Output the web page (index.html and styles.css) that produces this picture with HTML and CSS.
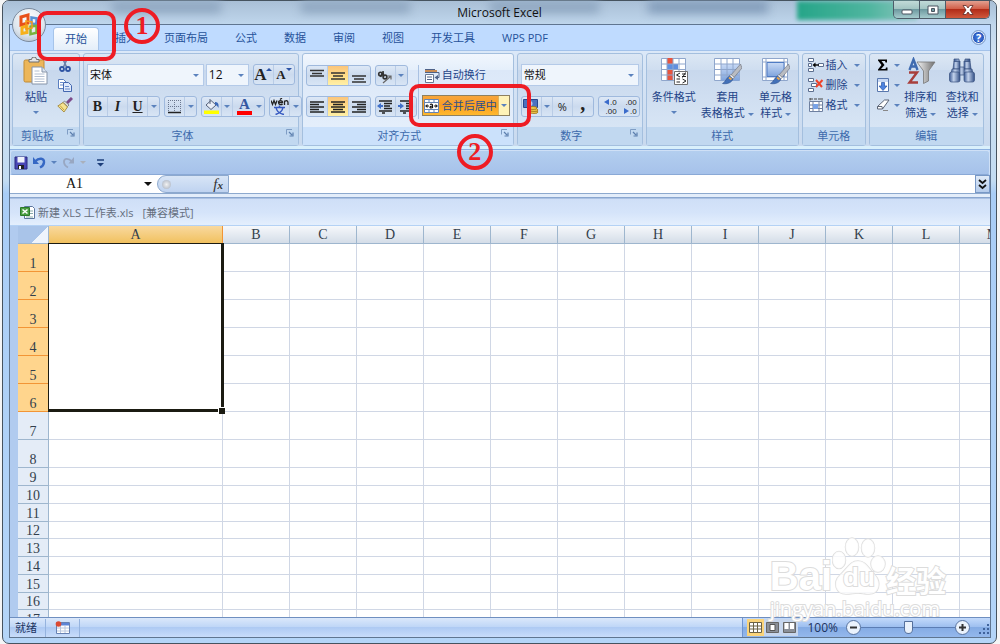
FILE: index.html
```html
<!DOCTYPE html>
<html lang="zh-CN">
<head>
<meta charset="utf-8">
<title>Microsoft Excel</title>
<link rel="stylesheet" href="styles.css">
</head>
<body>
<svg class="defs" aria-hidden="true">
  <defs>
    <linearGradient id="blue" x2="0" y2="1"><stop stop-color="#c9daf5"/><stop offset="1" stop-color="#7fa4dd"/></linearGradient>
    <linearGradient id="steel" x2="1" y2="0"><stop stop-color="#3d5c96"/><stop offset=".4" stop-color="#c3d3ec"/><stop offset="1" stop-color="#324f86"/></linearGradient>
    <linearGradient id="funnel" x2="1" y2="0"><stop stop-color="#f4f4f4"/><stop offset="1" stop-color="#6f6f6f"/></linearGradient>
    <symbol id="launch" viewBox="0 0 8 8"><path d="M.5 5.500V.5H6" fill="none" stroke="#7f9dc4"/><path d="M3 3l3 3M7 3.500V7H3.500" fill="none" stroke="#5c7fae" stroke-width="1.200"/></symbol>
    <symbol id="brush" viewBox="0 0 20 22"><path d="M18.500 1L9 12l3 2.500L20 5z" fill="#b9bcc2" stroke="#6b6f78" stroke-width=".6"/><path d="M9 11.500l3.200 2.800-1.200 1.700-3.700-3z" fill="#eee" stroke="#666" stroke-width=".5"/><path d="M7.500 13l3.300 3c-.8 3.600-5.800 5.500-10.300 4.500 3.200-1.600 3.500-5.300 7-7.500z" fill="#4270b8" stroke="#2d5391" stroke-width=".6"/><path d="M7 14.500l2.500 2" stroke="#e8a54a" stroke-width="1.800"/></symbol>
  </defs>
</svg>

<main class="window">
  <header class="titlebar">
    <span class="blur b1"></span><span class="blur b2"></span><span class="blur b3"></span><span class="blur b4"></span><span class="blur green"></span>
    <h1 class="title">Microsoft Excel</h1>
    <div class="winbtns">
      <button class="win" aria-label="最小化"><svg width="12" height="12"><rect x="1" y="6" width="10" height="4" rx="1" fill="#fff" stroke="#4a5560"/></svg></button>
      <button class="win" aria-label="最大化"><svg width="12" height="12"><path d="M1 2h10v8H1zM4.500 4.500v3h3v-3z" fill="#fff" stroke="#4a5560" fill-rule="evenodd"/></svg></button>
      <button class="win close" aria-label="关闭"><svg width="12" height="12"><path d="M1 1.500h3.200L6 4l1.800-2.500H11L8 6l3 4.500H7.800L6 8l-1.800 2.500H1L4 6z" fill="#fff" stroke="#5e2a26" stroke-width=".8"/></svg></button>
    </div>
    <button class="orb" aria-label="Office 按钮"><svg width="24" height="26" viewBox="0 0 24 26"><g fill="none"><path d="M4 5l7-2v8l-7 2z" stroke="#e8501a" stroke-width="3"/><path d="M14.500 5.500l5 .8v6l-5-.8z" stroke="#5a93d4" stroke-width="2.500"/><path d="M5 15.500l5-1.500v6.500l-5 1z" stroke="#f6b11b" stroke-width="3"/><path d="M13.500 14.500l6-.8v7l-6 1.500z" stroke="#7bb23c" stroke-width="2.500"/><path d="M9 9l6 1v6l-6 1z" stroke="#f39a1d" stroke-width="1.500"/></g></svg></button>
  </header>

  <div class="inner">
    <nav class="tabs">
      <button class="tab active">开始<span class="mark mark-tab"></span></button>
      <button class="tab">插入<span class="num num-one">1</span></button>
      <button class="tab">页面布局</button>
      <button class="tab">公式</button>
      <button class="tab">数据</button>
      <button class="tab">审阅</button>
      <button class="tab">视图</button>
      <button class="tab">开发工具</button>
      <button class="tab">WPS PDF</button>
      <button class="help" aria-label="帮助">?</button>
    </nav>

    <div class="ribbon">
      <section class="group g-clip">
        <div class="body row-body">
          <button class="big"><svg width="28" height="28" viewBox="0 0 28 28"><rect x="2" y="3" width="20" height="22" rx="1.500" fill="#ecb65a" stroke="#c08b35"/><path d="M7 5V2.500h2.500a2.500 2.500 0 0 1 5 0H17V5z" fill="#e6e6e6" stroke="#6f6f6f"/><path d="M10 10h10l5 5v12H10z" fill="#fff" stroke="#8593a8"/><path d="M20 10v5h5" fill="#dbe4f0" stroke="#8593a8"/><path d="M12.500 14h5M12.500 17h10M12.500 19.500h10M12.500 22h10M12.500 24.500h10" stroke="#b4c0d2"/></svg><span>粘贴</span><i class="caret"></i></button>
          <div class="stack">
            <button class="tiny" aria-label="剪切"><svg width="16" height="16" viewBox="0 0 16 16"><path d="M5.500 1l4 9M10.500 1l-4 9" stroke="#6a7fa8" stroke-width="1.600"/><g fill="none" stroke="#2f55a4" stroke-width="1.800"><circle cx="5" cy="12" r="2"/><circle cx="11" cy="12" r="2"/></g></svg></button>
            <button class="tiny" aria-label="复制"><svg width="16" height="16" viewBox="0 0 16 16"><path d="M1.500 2.500h5l3 3v6h-8z" fill="#fff" stroke="#5a7fc0"/><path d="M6.500 5.500h5l3 3v6h-8z" fill="#dfe9fb" stroke="#4468b0"/><path d="M8 9.500h4M8 12h5M3 5.500h3M3 8h3" stroke="#6b8ccb"/></svg></button>
            <button class="tiny" aria-label="格式刷"><svg width="16" height="16" viewBox="0 0 16 16"><path d="M15 1l-5 5" stroke="#7c4b8b" stroke-width="3"/><path d="M7.500 4l4.500 4-1.500 1.500L6 5.500z" fill="#ddd" stroke="#666" stroke-width=".7"/><path d="M6 5.500L10.500 10 7 15 .8 9z" fill="#f6e391" stroke="#9b7c2a" stroke-width=".8"/><path d="M3 8.500l4 4.500" stroke="#c7a23a"/></svg></button>
          </div>
        </div>
        <h2 class="label with-launch">剪贴板<button class="launch" aria-label="剪贴板选项"><svg width="8" height="8"><use href="#launch"/></svg></button></h2>
      </section>

      <section class="group g-font">
        <div class="body">
          <div class="line">
            <div class="sel grow"><select aria-label="字体"><option>宋体</option></select><i class="caret"></i></div>
            <div class="sel size"><select aria-label="字号"><option>12</option></select><i class="caret"></i></div>
            <div class="set push"><button class="ser big-a">A<sup class="up"></sup></button><button class="ser small-a">A<sup class="down"></sup></button></div>
          </div>
          <div class="line between">
            <div class="set"><button class="ser">B</button><button class="ser"><em>I</em></button><button class="ser"><u>U</u></button><button class="drop" aria-label="下划线"><i class="caret"></i></button></div>
            <div class="set"><button aria-label="边框"><svg width="14" height="14"><path d="M.5 0v12M6.500 0v12M12.500 0v12M0 .5h13M0 6.500h13" stroke="#6b7890" stroke-dasharray="1 1"/><path d="M0 12.500h13" stroke="#222" stroke-width="1.500"/></svg></button><button class="drop" aria-label="边框选项"><i class="caret"></i></button></div>
            <div class="set"><button aria-label="填充颜色"><svg width="16" height="15" viewBox="0 0 16 15"><path d="M2 6l5-4.500L12 6l-5 4.500z" fill="#e9eef7" stroke="#56627a"/><path d="M6 0v5" stroke="#56627a"/><path d="M11 3c3 0 4 2 3.500 6-1-2-2-3-3.500-3z" fill="#3c69b8"/><path d="M0 11.500h15V15H0z" fill="#ff0"/></svg></button><button class="drop" aria-label="填充选项"><i class="caret"></i></button><button class="ser fontcolor">A</button><button class="drop" aria-label="字体颜色选项"><i class="caret"></i></button></div>
            <div class="set"><button aria-label="拼音指南"><svg width="18" height="17" viewBox="0 0 18 17"><g fill="none" stroke="#222" stroke-width="1.300"><path d="M0 2.500l1.500 4 1.500-4 1.500 4L6 2.500M7.500 4.500h4c0-2.500-4-2.500-4 0 0 2.500 3 2.500 4 1.500M9 1.500l2-1.500M13.500 7V2.500M13.500 4c1-2 3.500-1.500 3.500 .5V7"/></g><path d="M3 9.500h11M8.500 7.500v2M4.500 16.500c5-1.500 7-4 7.500-7M5 9.500c.5 3 3 6 8 7" fill="none" stroke="#3558c0" stroke-width="1.500"/></svg></button><button class="drop" aria-label="拼音选项"><i class="caret"></i></button></div>
          </div>
        </div>
        <h2 class="label with-launch">字体<button class="launch" aria-label="字体选项"><svg width="8" height="8"><use href="#launch"/></svg></button></h2>
      </section>

      <section class="group g-align hot">
        <div class="body row-body align-body">
          <div class="lines">
            <div class="line">
              <div class="set three"><button aria-label="顶端对齐"><svg width="14" height="14"><path d="M0 1.500h14M2 4.500h10M0 7h14" stroke="#333" stroke-width="1.500"/></svg></button><button class="on" aria-label="垂直居中"><svg width="14" height="14"><path d="M0 4h14M2 7h10M0 10h14" stroke="#333" stroke-width="1.500"/></svg></button><button aria-label="底端对齐"><svg width="14" height="14"><path d="M0 7h14M2 10h10M0 13h14" stroke="#333" stroke-width="1.500"/></svg></button></div>
              <div class="set"><button aria-label="方向"><svg width="16" height="16" viewBox="0 0 16 16"><g fill="none" stroke="#333" stroke-width="1.600"><circle cx="3.500" cy="6" r="1.800"/><path d="M5.500 4.500L3.500 9"/><circle cx="8" cy="9" r="1.900"/><path d="M6 3l.5 6"/><path d="M6 15L14 8M10.500 8H14v3.500" stroke="#666" stroke-width="1.200"/></g></svg></button><button class="drop" aria-label="方向选项"><i class="caret"></i></button></div>
            </div>
            <div class="line">
              <div class="set three"><button aria-label="左对齐"><svg width="14" height="12"><path d="M0 1h14M0 3.500h9M0 6h14M0 8.500h9M0 11h14" stroke="#222" stroke-width="1.500"/></svg></button><button class="on" aria-label="居中"><svg width="14" height="12"><path d="M0 1h14M2 3.500h10M0 6h14M2 8.500h10M0 11h14" stroke="#222" stroke-width="1.500"/></svg></button><button aria-label="右对齐"><svg width="14" height="12"><path d="M0 1h14M5 3.500h9M0 6h14M5 8.500h9M0 11h14" stroke="#222" stroke-width="1.500"/></svg></button></div>
              <div class="set"><button aria-label="减少缩进量"><svg width="16" height="14"><path d="M2 1h13M7 3.500h8M7 6h6M7 8.500h8M2 11h13M5 13h3" stroke="#222" stroke-width="1.500"/><path d="M0 6l4-3v2h2v2H4v2z" fill="#3f6fc9"/></svg></button><button aria-label="增加缩进量"><svg width="16" height="14"><path d="M2 1h13M8 3.500h7M8 6h6M8 8.500h7M2 11h13M5 13h3" stroke="#222" stroke-width="1.500"/><path d="M6 6L2 3v2H0v2h2v2z" fill="#3f6fc9"/></svg></button></div>
            </div>
          </div>
          <div class="wrapcol">
            <button class="wrapbtn"><svg width="16" height="15"><path d="M1 1.500h10M1 4.500h14v5h-3" fill="none" stroke="#4e6288"/><path d="M1 3h12" stroke="#c98b52" stroke-width="2"/><path d="M1.500 6.500h8v8h-8z" fill="#fff" stroke="#6a7891"/><path d="M3 9h5M3 11.500h5" stroke="#4e6288"/><path d="M14 7l-3.500 2.500L14 12z" fill="#4e6288"/></svg>自动换行</button>
            <div class="merge"><button class="mergebtn"><svg width="15" height="14"><path d="M.5.5h14v13H.5zM5 .5v3M10 .5v3M5 10.500v3M10 10.500v3M.5 3.500h14M.5 10.500h14" fill="#fff" stroke="#6484b5"/><path d="M1 7l2.500-2v1.500H5v1H3.500V9zM14 7l-2.500-2v1.500H10v1h1.500V9z" fill="#222"/><path d="M6 5.500c1.500-.8 2.500-.3 2.500.8V9M8.500 7c-3 0-3 2-1.500 2 .8 0 1.500-.5 1.500-1" fill="none" stroke="#111" stroke-width="1.200"/></svg>合并后居中</button><button class="mergedrop" aria-label="合并选项"><i class="caret"></i></button><span class="mark mark-merge"></span><span class="num num-two">2</span></div>
          </div>
        </div>
        <h2 class="label with-launch">对齐方式<button class="launch" aria-label="对齐选项"><svg width="8" height="8"><use href="#launch"/></svg></button></h2>
      </section>

      <section class="group g-num">
        <div class="body">
          <div class="line"><div class="sel grow"><select aria-label="数字格式"><option>常规</option></select><i class="caret"></i></div></div>
          <div class="line between">
            <div class="set"><button aria-label="会计数字格式"><svg width="16" height="15"><path d="M.5.500h14v8H.5z" fill="#4c72bf" stroke="#29488e"/><circle cx="7" cy="4.500" r="2.500" fill="#b9cdf0"/><g fill="#f0c64a" stroke="#9b7219" stroke-width=".8"><ellipse cx="11" cy="13" rx="4" ry="1.500"/><ellipse cx="11" cy="11" rx="4" ry="1.500"/><ellipse cx="10" cy="9" rx="4" ry="1.500"/></g></svg></button><button class="drop" aria-label="货币选项"><i class="caret"></i></button><button class="pct">%</button><button class="ser comma">,</button></div>
            <div class="set"><button class="dec"><span class="d-left">.0</span><span>.00</span></button><button class="dec"><span>.00</span><span class="d-right">.0</span></button></div>
          </div>
        </div>
        <h2 class="label with-launch">数字<button class="launch" aria-label="数字选项"><svg width="8" height="8"><use href="#launch"/></svg></button></h2>
      </section>

      <section class="group g-style">
        <div class="body row-body">
          <button class="big"><svg width="28" height="28" viewBox="0 0 28 28"><path d="M1.500 1.500h24v22h-24z" fill="#fff" stroke="#8fa6cc"/><path d="M7 1h6v22H7z" fill="#e8553e"/><path d="M7 7h11v5H7z" fill="#5f8fe0"/><path d="M7 1v22M13 1v22M19 1v22M1 7h24M1 12.500h24M1 18h24" stroke="#8fa6cc"/><path d="M14.500 14.500h13v13h-13z" fill="#fff" stroke="#707070"/><path d="M20 16l-3.500 2 3.500 2M16.500 22H20M16.500 25H20M22 17h4M22 19.500h4M25.500 15.500l-3 5M22.500 22l3.500 2-3.500 2" fill="none" stroke="#222"/></svg><span>条件格式</span><i class="caret"></i></button>
          <button class="big"><svg width="29" height="28" viewBox="0 0 29 28"><path d="M1.500 1.500h25v22h-25z" fill="#fff" stroke="#8fa6cc"/><path d="M8 7h18.500v16.500H8z" fill="url(#blue)"/><path d="M8 1v22M14 1v22M20 1v22M1 7h25M1 12.500h25M1 18h25" stroke="#8fa6cc"/><use href="#brush" x="9" y="6" width="20" height="22"/></svg><span>套用</span><span>表格格式 <i class="caret"></i></span></button>
          <button class="big"><svg width="29" height="28" viewBox="0 0 29 28"><path d="M1.500 1.500h25v22h-25zM1 5h25M1 20h25M5 1v22M23 1v22" fill="#fff" stroke="#8fa6cc"/><path d="M6 5.500h17v14H6z" fill="url(#blue)" stroke="#4f7bc4"/><use href="#brush" x="9" y="6" width="20" height="22"/></svg><span>单元格</span><span>样式 <i class="caret"></i></span></button>
        </div>
        <h2 class="label">样式</h2>
      </section>

      <section class="group g-cells">
        <div class="body cmds">
          <button class="cmd"><svg width="16" height="14"><path d="M.5 .5h5v3h-5zM.5 10.500h5v3h-5zM.5 5.500h3v3h-3zM10.500 5.500h5v3h-5z" fill="#fff" stroke="#5c6f90"/><path d="M6 7h5" stroke="#111" stroke-width="1.500"/><path d="M4.500 7l3-2.500v5z"/></svg>插入<i class="caret"></i></button>
          <button class="cmd"><svg width="16" height="14"><path d="M.5 .5h5v3h-5zM.5 10.500h5v3h-5zM3.500 5.500h5v3h-5z" fill="#fff" stroke="#5c6f90"/><path d="M8 2l6 7M14.500 2L8 9" stroke="#f0432a" stroke-width="2"/></svg>删除<i class="caret"></i></button>
          <button class="cmd"><svg width="16" height="15"><path d="M1.500 3.500h13v10h-13zM1 7h14M1 10.500h14M5 3v11M11 3v11" fill="#fff" stroke="#6e80a0"/><path d="M5 6h5v5H5z" fill="#79a3e6"/><path d="M2 1h12M2 0v2.500M14 0v2.500" stroke="#444" stroke-dasharray="3 1"/></svg>格式<i class="caret"></i></button>
        </div>
        <h2 class="label">单元格</h2>
      </section>

      <section class="group g-edit">
        <div class="body row-body">
          <div class="cmds">
            <button class="cmd" aria-label="求和"><svg width="14" height="14"><path d="M2 1.500h9v3H9.500L9 3H5.500L8.500 7l-3.500 4h4.500l.5-1.500h1.500v3H2v-1L5.500 7 2 2.500z"/></svg><i class="caret"></i></button>
            <button class="cmd" aria-label="填充"><svg width="14" height="15"><path d="M1.500.500h11v13h-11z" fill="#fff" stroke="#5877ad"/><path d="M2 1h10v3H2z" fill="#c7d8f4"/><path d="M5.500 4.500h3V8H11l-4 4.500L3 8h2.500z" fill="#4e83e0" stroke="#2a56a8" stroke-width=".7"/></svg><i class="caret"></i></button>
            <button class="cmd" aria-label="清除"><svg width="14" height="14"><path d="M8.500 2H13L6.500 11H1.500v-2.500z" fill="#fff" stroke="#5c6576"/><path d="M1.500 8.500H6l.5 2.500" fill="none" stroke="#5c6576"/><path d="M7 12.500h5" stroke="#888"/></svg><i class="caret"></i></button>
          </div>
          <button class="big"><svg width="30" height="28" viewBox="0 0 30 28"><path d="M3.500 13L7.500 2.500 11.500 13M5 9.500h5" fill="none" stroke="#3f6bb0" stroke-width="2.400"/><path d="M3 15.500h8l-7.500 10h8.500" fill="none" stroke="#a83f3c" stroke-width="2.400"/><path d="M11 5h18l-6.500 9v10l-5 2.500V14z" fill="url(#funnel)" stroke="#777" stroke-width=".8"/></svg><span>排序和</span><span>筛选 <i class="caret"></i></span></button>
          <button class="big"><svg width="28" height="28" viewBox="0 0 28 28"><g fill="url(#steel)" stroke="#38507e" stroke-width=".7"><path d="M6 4h6v8H5z"/><path d="M16 4h6l1 8h-7z"/><path d="M4 12h8l1 5H3z"/><path d="M16 12h8l1 5H15z"/><rect x="1.500" y="15" width="10.500" height="10" rx="2"/><rect x="16" y="15" width="10.500" height="10" rx="2"/><path d="M6 2h5v2.500H6zM17 2h5v2.500h-5zM12 10h4v8h-4z"/></g></svg><span>查找和</span><span>选择 <i class="caret"></i></span></button>
        </div>
        <h2 class="label">编辑</h2>
      </section>
    </div>

    <div class="qat">
      <button aria-label="保存"><svg width="14" height="14"><path d="M1 1h12v12H1z" fill="#4946b5" stroke="#2b2a80"/><path d="M3.500 1h7v5.500h-7z" fill="#eef1fb"/><path d="M4 9h6v4H4z" fill="#222"/><path d="M5 10h2v3H5z" fill="#fff"/></svg></button>
      <button class="undo" aria-label="撤消"><svg width="13" height="13"><path d="M2 5.500C6 1.500 11.500 2 11 6.500c-.3 2.500-2 4-4 5" fill="none" stroke="#3668c4" stroke-width="2.400"/><path d="M0 1v7h6z" fill="#3668c4"/></svg></button>
      <i class="caret"></i>
      <button class="undo" aria-label="恢复"><svg width="13" height="13"><path d="M10 5.500C6 1.500 1.500 2 2 6.500c.3 2.500 2 4 4 5" fill="none" stroke="#98a7c2" stroke-width="1.800"/><path d="M12 1v6.500H6.500z" fill="#98a7c2"/></svg></button>
      <i class="caret dim"></i>
      <button class="custom" aria-label="自定义快速访问工具栏"><svg width="7" height="8"><path d="M0 1h7" stroke="#1e3f7a" stroke-width="1.500"/><path d="M0 4h7L3.500 7.500z" fill="#1e3f7a"/></svg></button>
    </div>

    <div class="formula">
      <div class="namebox"><input class="cellref" aria-label="名称框" value="A1"><button aria-label="名称列表"><i class="caret black"></i></button></div>
      <button class="fx"><span class="knob"></span><span><i>f</i><small>x</small></span></button>
      <input class="fxinput" aria-label="编辑栏">
      <button class="expand" aria-label="展开编辑栏"><svg width="9" height="11"><path d="M1 1l3.500 3L8 1M1 6l3.500 3L8 6" fill="none" stroke="#111" stroke-width="1.800"/></svg></button>
    </div>

    <div class="booktitle">
      <svg width="15" height="15"><path d="M4.500 1.500h8l2 2v10h-10z" fill="#fff" stroke="#5d779f"/><path d="M.5 2.500h9v8h-9z" fill="#4c9f43" stroke="#2c7a28"/><path d="M2.500 4.500l5 4M7.500 4.500l-5 4" stroke="#fff" stroke-width="1.600"/><path d="M10 6h3M10 8.500h3M6 12h7" stroke="#8aa"/></svg>
      <span>新建 XLS 工作表.xls</span><span>[兼容模式]</span>
    </div>

    <div class="sheet">
      <table class="grid" id="grid"></table>
    </div>

    <footer class="status">
      <span class="ready">就绪</span>
      <button class="macro" aria-label="录制宏"><svg width="15" height="13"><path d="M1.500 1.500h13v11h-13z" fill="#fff" stroke="#6681b3"/><path d="M2 2h12v2.500H2z" fill="#5d84d6"/><path d="M2 7h12M2 10h12M5.500 5v7M10 5v7" stroke="#b8c6de"/><circle cx="3.500" cy="3" r="2.800" fill="#dc4a33"/></svg></button>
      <div class="right">
        <div class="views">
          <button class="on" aria-label="普通"><svg width="13" height="11"><path d="M.5.500h12v10H.5zM0 4h13M0 7h13M4.500 0v11M8.500 0v11" fill="#fff" stroke="#6b6246"/></svg></button>
          <button aria-label="页面布局"><svg width="13" height="11"><path d="M.5.500h12v10H.5z" fill="#8a8f98" stroke="#666"/><path d="M4 2.500h5v6H4z" fill="#fff" stroke="#555"/></svg></button>
          <button aria-label="分页预览"><svg width="13" height="11"><path d="M.5.500h12v10H.5z" fill="#8a8f98" stroke="#666"/><path d="M1.500 1h4v6h-4zM7 1h4v6H7z" fill="#fff"/></svg></button>
        </div>
        <span class="pc">100%</span>
        <button class="zoom" aria-label="缩小"><svg width="9" height="9"><path d="M1 4.500h7" stroke="#333" stroke-width="2"/></svg></button>
        <input class="slider" type="range" aria-label="显示比例" min="0" max="100" value="50">
        <button class="zoom" aria-label="放大"><svg width="9" height="9"><path d="M1 4.500h7M4.500 1v7" stroke="#333" stroke-width="2"/></svg></button>
        <svg class="grip" width="11" height="11"><path d="M8 1h2v2H8zM4 5h2v2H4zM8 5h2v2H8zM0 9h2v2H0zM4 9h2v2H4zM8 9h2v2H8z" fill="#40639c"/></svg>
      </div>
    </footer>
  </div>

  <div class="watermark" aria-hidden="true">
    <div class="wm-top"><span class="wm-bai">Bai</span><span class="wm-paw"><svg width="54" height="58" viewBox="0 0 54 58"><g fill="#fff" fill-opacity=".8" stroke="#dedede" stroke-width="1.500"><ellipse cx="20" cy="10" rx="6.500" ry="9"/><ellipse cx="36" cy="11" rx="6.500" ry="9"/><ellipse cx="7" cy="23" rx="6.500" ry="8.500"/><ellipse cx="46" cy="27" rx="7" ry="8"/><path d="M26 24c8 0 11 8 17 14 7 8 4 19-6 19-5 0-7-1-11-1s-7 1-12 1C4 57 0 46 8 38c7-6 10-14 18-14z"/></g></svg><b>du</b></span><span class="wm-cn">经验</span></div>
    <div class="wm-url">jingyan.baidu.com</div>
  </div>
</main>
<script src="grid.js"></script>
</body>
</html>
```
FILE: grid.js
```js
const columns = "ABCDEFGHIJKLM".split("");
const rowCount = 17;
const mergedRows = 6;
const tallRows = 8;

const heads = columns
  .map((c, i) => `<th scope="col"${i === 0 ? ' class="picked"' : ""}>${c}</th>`)
  .join("");

let html = `<colgroup><col class="c-head"><col class="c-first">${'<col class="c-rest">'.repeat(columns.length - 1)}</colgroup>`;
html += `<thead><tr><td class="corner"></td>${heads}</tr></thead><tbody>`;

for (let r = 1; r <= rowCount; r++) {
  const picked = r <= mergedRows;
  html += `<tr class="${r <= tallRows ? "tall" : "short"}"><th scope="row"${picked ? ' class="picked"' : ""}>${r}</th>`;
  if (r === 1) html += `<td class="merged" rowspan="${mergedRows}"></td>`;
  html += "<td></td>".repeat(columns.length - (picked ? 1 : 0)) + "</tr>";
}

document.getElementById("grid").innerHTML = html + "</tbody>";
```
FILE: styles.css
```css
* { box-sizing: border-box; }
body {
  margin: 0; height: 100vh; display: flex; background: #f4f5f6; overflow: hidden;
  font: 11px/16px "Open Sans", "Noto Sans CJK SC", sans-serif; color: #1f4488;
}
button { font: inherit; color: inherit; border: 0; padding: 0; margin: 0; background: none; display: flex; align-items: center; justify-content: center; }
input, select { font: inherit; }
h1, h2 { margin: 0; font-weight: normal; font-size: inherit; }
svg { display: block; flex: none; }
.defs { position: absolute; width: 0; height: 0; }

.window {
  position: relative; flex: 1; min-width: 0; display: flex; flex-direction: column;
  margin: 0 3px 0 2px; padding: 0 5px 5px 6px; border: 1px solid #46535f; border-radius: 7px;
  background: linear-gradient(#b5cfe9, #cfe0f0 8%, #c3dcf2 28%, #a9cdf6 30%, #b4d5f8);
}
.titlebar { position: relative; height: 23px; flex: none; display: flex; justify-content: center; background: linear-gradient(#a9bfd6, #bfd6ec); margin: 0 -5px 0 -6px; border-radius: 6px 6px 0 0; }
.title { font-size: 12px; line-height: 23px; color: #111; position: relative; }
.blur { position: absolute; top: 0; height: 12px; filter: blur(5px); background: #8fa7c1; }
.b1 { left: 11%; width: 11%; }
.b2 { left: 30%; width: 11%; }
.b3 { left: 49%; width: 11%; }
.b4 { left: 65%; width: 12%; background: #829cba; }
.green { left: 80%; width: 12%; height: 19px; filter: blur(2px); background: linear-gradient(90deg, #25a588, #4fb59f 60%, #8fc6c0); }
.winbtns { position: absolute; right: 6px; top: 0; display: flex; border: 1px solid #4d5c69; border-top: 0; border-radius: 0 0 5px 5px; overflow: hidden; }
.win { width: 26px; height: 17px; border-right: 1px solid #4d5c69; background: linear-gradient(#c1dad8, #a3c5c3 45%, #6e9aa0 50%, #a5cbcd); }
.win.close { width: 43px; border: 0; background: linear-gradient(#e2a090, #d2604a 45%, #b22c18 50%, #d0583c); }
.orb { position: absolute; left: 9px; top: 7px; width: 34px; height: 34px; z-index: 3; border-radius: 50%; border: 1px solid #7b8a9d; background: radial-gradient(circle at 50% 30%, #fff, #dce4ec 60%, #a4b3c3); }

.inner { flex: 1; min-height: 0; display: flex; flex-direction: column; border: 1px solid #5f7590; background: #bfdbff; }
.tabs { height: 25px; flex: none; display: flex; gap: 1px; padding: 2px 5px 0 43px; }
.tab { position: relative; padding: 0 13px 2px; color: #26529a; }
.active { padding: 0 11px 1px; margin-right: 2px; background: linear-gradient(#fff, #e4eef9); border: 1px solid #a6c4ea; border-bottom: 0; border-radius: 4px 4px 0 0; }
.help { margin: 4px 0 0 auto; width: 13px; height: 13px; border-radius: 50%; border: 1px solid #e8f0fb; outline: 1px solid #7c98c4; background: radial-gradient(#4a82e6, #1742a8); color: #fff; font-weight: bold; line-height: 11px; }

.mark { position: absolute; z-index: 5; border: 4px solid #ee1c24; border-radius: 10px; pointer-events: none; }
.mark-tab { inset: -17px -18px -11px -17px; }
.mark-merge { inset: -12px -22px -12px -14px; }
.num { position: absolute; z-index: 6; width: 36px; height: 36px; border: 4px solid #ee1c24; border-radius: 50%; color: #ee1c24; text-align: center; font: bold 26px/28px "Liberation Serif", serif; }
.num-one { left: 22px; top: -19px; }
.num-two { left: 34px; top: 38px; }

.ribbon { flex: none; display: flex; gap: 3px; height: 100px; padding: 2px 6px 3px 2px; background: linear-gradient(#dbe8f8, #c8d9ee); border-top: 1px solid #a3c2ea; border-bottom: 1px solid #8bb0e0; box-shadow: inset 0 -3px 0 #d9f0fc; }
.group { display: flex; flex-direction: column; min-width: 0; border: 1px solid #a4bfde; border-radius: 3px; background: linear-gradient(#dce7f4, #cfdef0 17%, #c8d8ed 18%, #dce9f7); }
.hot { background: linear-gradient(#f1f6fd, #e5effb 17%, #dce8f8 18%, #e6f0fc); }
.g-clip { flex: 67 1 0; } .g-font { flex: 217 1 0; } .g-align { flex: 213 1 0; } .g-num { flex: 126 1 0; }
.g-style { flex: 153 1 0; } .g-cells { flex: 63 1 0; } .g-edit { flex: 115 1 0; }
.body { flex: 1; display: flex; flex-direction: column; gap: 10px; padding: 10px 3px 0; }
.row-body { flex-direction: row; gap: 0; padding: 3px 3px 0; }
.label { position: relative; height: 18px; line-height: 18px; text-align: center; color: #3d6aac; background: #c1d8f0; }
.hot .label { background: #cbe1fb; }
.with-launch { padding-right: 17px; }
.launch { position: absolute; right: 4px; top: 2px; }

.big { flex: 1 1 auto; flex-direction: column; justify-content: flex-start; white-space: nowrap; line-height: 16px; }
.big svg { margin-bottom: 4px; }
.big > .caret { margin-top: 6px; }
.big span .caret { display: inline-block; vertical-align: middle; }
.caret { width: 0; height: 0; flex: none; border: 3px solid transparent; border-top-color: #5b82bd; border-bottom: 0; }
.caret.dim { border-top-color: #a9b0bc; }
.caret.black { border-width: 4px 4px 0; border-top-color: #111; }
.stack { display: flex; flex-direction: column; gap: 4px; padding-right: 2px; }
.tiny { width: 18px; height: 16px; }

.line { display: flex; gap: 4px; height: 22px; align-items: flex-start; }
.between { justify-content: space-between; }
.g-font .line:first-child { gap: 2px; }
.push { margin-left: 2px; }
.sel { position: relative; height: 22px; background: #eff5fc; border: 1px solid #b4cae8; }
.sel select { appearance: none; width: 100%; height: 20px; border: 0; background: none; padding: 0 2px; color: #111; }
.sel .caret { position: absolute; right: 4px; top: 9px; }
.grow { flex: 1; }
.size { width: 43px; }
.size select { font-size: 12px; }
.set { display: flex; height: 21px; border: 1px solid #9fb9dd; border-radius: 3px; background: linear-gradient(#dde8f6, #cbdaee 50%, #d8e5f5); }
.set button { min-width: 20px; border-right: 1px solid #b9cce6; }
.set button:last-child { border-right: 0; }
.set .drop { min-width: 11px; width: 11px; }
.set .on { background: linear-gradient(#fbc57b, #ffe08a 60%, #fff0a8); }
.three button { width: 21px; }
.ser { font: bold 14px/18px "Liberation Serif", serif; color: #222; }
.big-a { font-size: 17px; } .small-a { font-size: 13px; }
.up, .down { align-self: flex-start; margin-top: 3px; border: 3px solid transparent; border-top: 0; border-bottom-color: #2d54a5; }
.down { border-top: 3px solid #2d54a5; border-bottom: 0; }
.set .fontcolor { color: #3457a0; font-size: 15px; line-height: 13px; align-self: center; height: 16px; min-width: 15px; margin: 0 1px 0 4px; border: 0; border-bottom: 4px solid #f00; }
.pct { color: #222; }
.set .comma { font-size: 20px; line-height: 8px; padding-bottom: 8px; min-width: 20px; }
.dec { flex-direction: column; align-items: flex-end; font: 8px/9px "Liberation Sans", sans-serif; color: #222; padding-right: 2px; }
.set .dec { border: 0; }
.d-left, .d-right { display: flex; align-items: center; gap: 1px; }
.d-left::before { content: ""; border: solid transparent; border-width: 3px 5px 3px 0; border-right-color: #3a6bcb; }
.d-right::before { content: ""; border: solid transparent; border-width: 3px 0 3px 5px; border-left-color: #3a6bcb; }
.align-body { padding-top: 11px; gap: 16px; }
.lines { display: flex; flex-direction: column; gap: 9px; width: 96px; }
.wrapcol { flex: 1; display: flex; flex-direction: column; align-items: flex-start; gap: 10px; border-left: 1px solid #a9c1e2; padding-left: 3px; height: 54px; }
.wrapbtn { gap: 2px; height: 20px; padding-left: 2px; white-space: nowrap; }
.merge { position: relative; display: flex; align-self: stretch; height: 21px; border: 1px solid #8e8160; }
.mergebtn { flex: 1; gap: 3px; white-space: nowrap; background: linear-gradient(#f7a63d, #fa9d21 50%, #ffb92e); color: #2c4e8e; }
.mergedrop { width: 11px; background: #fff3b8; border-left: 1px solid #e0b35d; }

.g-style .row-body { padding: 3px 2px 0; justify-content: space-between; }
.g-style .big { flex: 0 1 auto; width: 50px; }
.g-style .big:nth-child(2) { width: 56px; }
.g-style .big:nth-child(3) { width: 40px; }
.cmds { display: flex; flex-direction: column; gap: 4px; padding: 3px 2px 0; }
.cmd { height: 16px; gap: 2px; white-space: nowrap; align-self: flex-start; padding-left: 3px; }
.cmd .caret { margin-left: 4px; }
.g-edit .row-body { padding-right: 0; }
.g-edit .cmds { padding: 0; }
.g-edit .cmd .caret { margin-left: 2px; }

.qat { flex: none; height: 25px; display: flex; align-items: center; gap: 5px; padding: 0 3px; background: linear-gradient(#b3ceef, #a6c2ea); border: 1px solid #cfe0f6; border-bottom-color: #8aa9d6; border-radius: 3px; }
.custom { margin-left: 6px; }

.formula { flex: none; height: 19px; display: flex; background: #fff; border-bottom: 1px solid #8da9ce; }
.namebox { flex: none; width: 147px; display: flex; }
.cellref { width: 100%; min-width: 0; flex: 1; border: 0; padding: 0; text-align: center; font: 14px/16px "Liberation Serif", serif; color: #111; background: none; }
.namebox button { width: 18px; }
.fx { flex: none; width: 72px; justify-content: space-between; padding: 0 5px 0 4px; border: 1px solid #8da9ce; border-radius: 10px 0 0 10px; background: linear-gradient(#d8e5f6, #bfd3f0); color: #333; font: 15px/16px "Liberation Serif", serif; }
.fx small { font-size: 11px; font-style: italic; font-weight: bold; }
.knob { width: 9px; height: 9px; border-radius: 50%; background: radial-gradient(#f2f2f2, #a3adbd); }
.fxinput { flex: 1; min-width: 0; border: 0; background: #fff; }
.expand { width: 15px; border: 1px solid #7898c6; background: linear-gradient(#dfeaf8, #b4cbeb); }

.booktitle { flex: none; height: 32px; display: flex; align-items: center; gap: 3px; padding: 6px 10px 0; color: #666f7e; border-bottom: 1px solid #b4d2f5; background: linear-gradient(#e3edfa 0 3px, #8aa6cf 3px 4px, #cfdff7 5px, #d5e4fa 60%, #e4effd); }
.booktitle span + span { margin-left: 6px; }

.sheet { flex: 1; min-height: 0; overflow: hidden; padding-left: 8px; background: #b1cbef; }
.grid { table-layout: fixed; border-spacing: 0; width: 1009px; background: #fff; font: 14px/14px "Liberation Serif", "Noto Sans CJK SC", serif; color: #333f4c; }
.c-head { width: 31px; } .c-first { width: 174px; } .c-rest { width: 67px; }
.grid th, .grid td { padding: 0; border-right: 1px solid #d0d7e5; border-bottom: 1px solid #d0d7e5; font-weight: normal; }
.grid thead th { height: 18px; border-color: #9eb6ce; background: linear-gradient(#f6f8fb, #d4dde8); }
.grid thead .picked { background: linear-gradient(#f9d99f, #f1c15f); border-color: #f29536; }
.grid .corner { border-color: #9eb6ce; background: linear-gradient(135deg, #a9c4e9 64%, #eef4fc 65%); }
.grid tbody th { background: #e4ecf7; border-color: #9eb6ce; vertical-align: bottom; }
.grid tbody .picked { background: #ffd58d; border-color: #f29536; }
.tall { height: 28px; }
.short { height: 18px; }
.short:nth-child(4n) { height: 17px; }
.grid .merged { position: relative; }
.merged::before { content: ""; position: absolute; inset: -1px -2px -1px -1px; border: solid #1b1b12; border-width: 1px 3px 3px 1px; }
.merged::after { content: ""; position: absolute; right: -3px; bottom: -3px; width: 6px; height: 6px; background: #1b1b12; border: solid #fff; border-width: 1px 0 0 1px; }

.status { flex: none; height: 20px; display: flex; align-items: center; padding: 0 0 0 5px; color: #1b3360; border-top: 1px solid #6f8fc0; background: linear-gradient(#dbe8fb, #c0d7f7 45%, #aecaf3 50%, #c8dcfa); }
.macro { margin-left: 8px; padding: 0 9px; height: 18px; border: solid #95b3de; border-width: 0 1px; }
.right { display: flex; align-items: center; align-self: stretch; margin-left: auto; border-left: 1px solid #6f94cf; background: linear-gradient(#c3dafb, #9fc0f0 45%, #84abe4 50%, #94b8ec); }
.views { display: flex; padding-left: 4px; height: 19px; align-items: center; }
.views button { width: 17px; height: 17px; background: #c6d6ee; }
.views .on { background: #fbd47a; }
.pc { font-size: 12px; margin: 0 8px 0 9px; }
.zoom { width: 15px; height: 15px; border: 1px solid #56729f; border-radius: 50%; background: #eaf2fc; }
.slider { appearance: none; width: 94px; height: 15px; margin: 0; background: linear-gradient(#5b7db4, #5b7db4) center / 100% 1px no-repeat; }
.slider::-webkit-slider-thumb { appearance: none; width: 9px; height: 13px; border: 1px solid #54709d; border-radius: 1px 1px 5px 5px; background: #e9f1fb; }
.grip { align-self: flex-end; margin: 0 0 3px 9px; }

.watermark { position: absolute; right: 50px; bottom: 21px; z-index: 8; pointer-events: none; color: #fff; -webkit-text-stroke: 2px #dcdcdc; paint-order: stroke; }
.wm-top { display: flex; align-items: flex-end; height: 58px; }
.wm-bai { font: bold 40px/38px "Liberation Sans", sans-serif; }
.wm-paw { position: relative; }
.wm-paw b { position: absolute; left: 11px; bottom: 5px; font: bold 26px/26px "Liberation Sans", sans-serif; }
.wm-cn { font: bold 30px/32px "Noto Sans CJK SC", sans-serif; }
.wm-url { font-size: 20px; line-height: 27px; }
```
